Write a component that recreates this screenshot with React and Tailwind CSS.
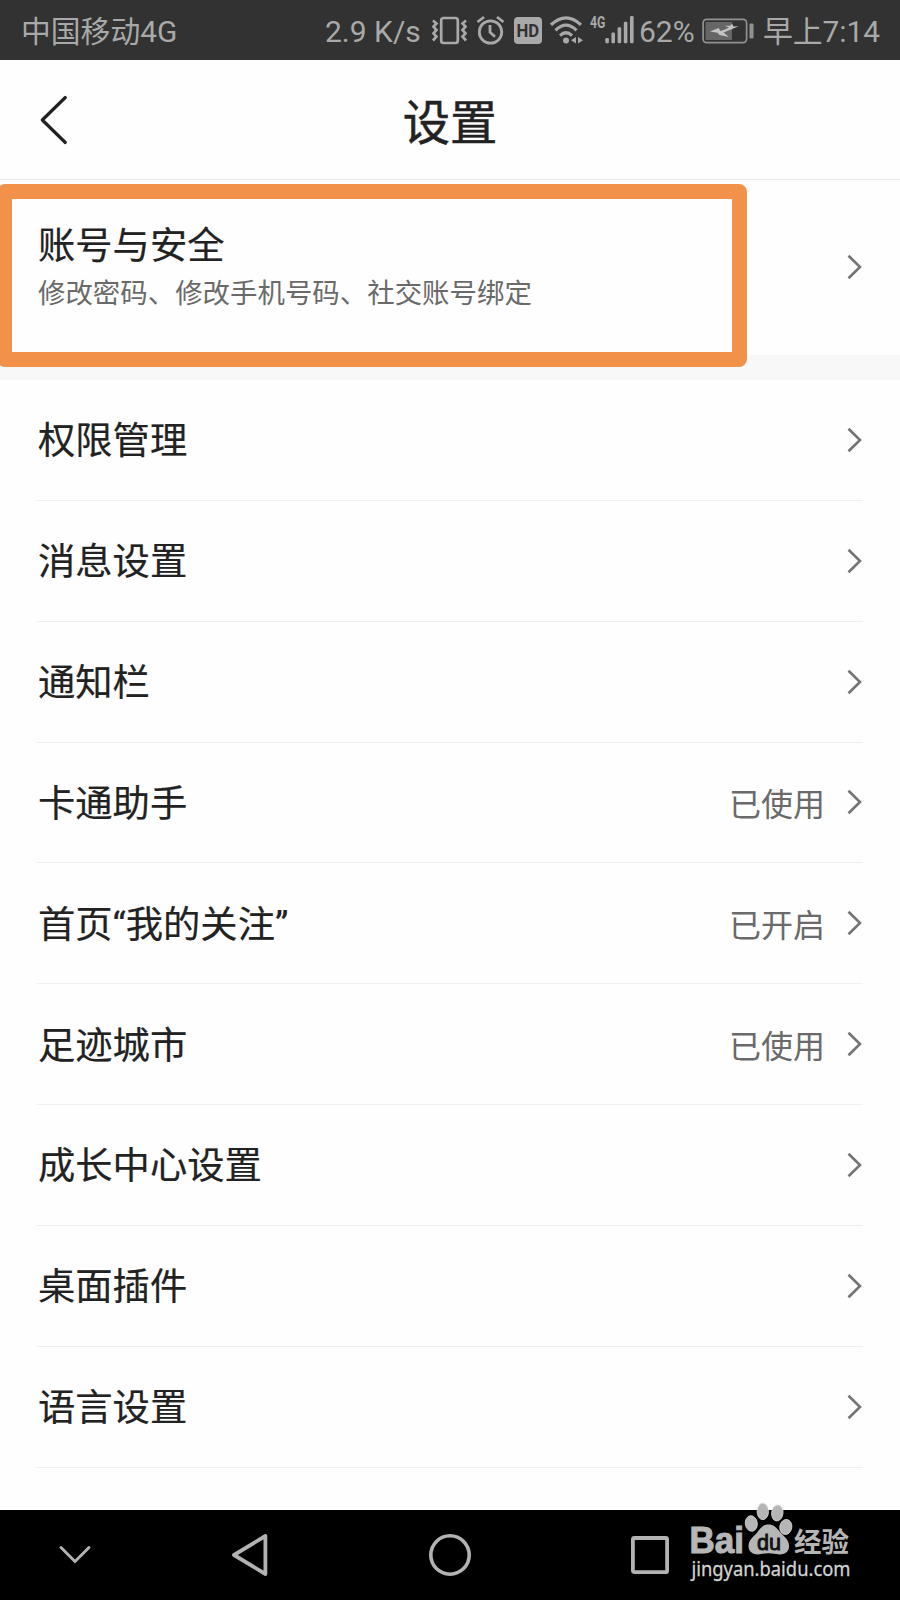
import React from "react";

const rows = [
  { label: "权限管理" },
  { label: "消息设置" },
  { label: "通知栏" },
  { label: "卡通助手", value: "已使用" },
  { label: "首页“我的关注”", value: "已开启" },
  { label: "足迹城市", value: "已使用" },
  { label: "成长中心设置" },
  { label: "桌面插件" },
  { label: "语言设置" },
];

function Chevron() {
  return (
    <svg className="shrink-0" width="16" height="26" viewBox="0 0 16 26" fill="none" stroke="#747474" strokeWidth="2.6">
      <path d="M1.5 1.7 L13 13 L1.5 24.3" />
    </svg>
  );
}

function StatusBar() {
  return (
    <div className="flex h-[60px] shrink-0 items-center bg-[#323232] pl-[21px] font-[Roboto,'Noto_Sans_CJK_SC',sans-serif] text-[30px] leading-[60px] whitespace-nowrap text-[#a9a9a9]">
      <div className="w-[304px] shrink-0 pt-[3px] text-[29.8px]">中国移动4G</div>
      <div className="w-[107px] shrink-0 pt-[3px]">2.9 K/s</div>

      {/* Vibrate */}
      <svg className="shrink-0" width="35" height="30" viewBox="0 0 35 30" fill="none" stroke="#a9a9a9" strokeWidth="2.7">
        <rect x="9.2" y="3" width="16.6" height="25" rx="2.5" />
        <path d="M1 5.5 L4.5 8.5 L1.5 11.7 L4.5 15 L1.5 18.3 L4.5 21.5 L1 25.5" />
        <path d="M34 5.5 L30.5 8.5 L33.5 11.7 L30.5 15 L33.5 18.3 L30.5 21.5 L34 25.5" />
      </svg>

      {/* Alarm */}
      <svg className="ml-[9px] shrink-0" width="29" height="30" viewBox="0 0 29 30" fill="none" stroke="#a9a9a9" strokeWidth="2.8">
        <circle cx="14.5" cy="17" r="11.2" />
        <path d="M14 10 V17.2 L19 21.7" />
        <path d="M1.5 7 L8 2 M21 2 L27.5 7" />
      </svg>

      {/* HD */}
      <div className="ml-[9px] flex h-[27px] w-[28px] shrink-0 items-center justify-center rounded-[4px] bg-[#a9a9a9] text-[19px] leading-none font-bold text-[#323232]">
        <span className="scale-x-[0.88]">HD</span>
      </div>

      {/* Wifi */}
      <svg className="ml-[8px] shrink-0" width="33" height="30" viewBox="0 0 33 30" fill="none" stroke="#a9a9a9" strokeWidth="3.1">
        <path d="M1 9.8 Q16 -4.2 31 9.8" />
        <path d="M5.5 15.3 Q16 5.1 26.5 15.3" />
        <path d="M10 20.6 Q16 14.9 22 20.6" />
        <circle cx="16" cy="25.4" r="3" fill="#a9a9a9" stroke="none" />
        <path d="M26 22 V28.5 L21 25.3 Z M28 22 V28.5 L33 25.3 Z" fill="#a9a9a9" stroke="none" />
      </svg>

      {/* Signal */}
      <div className="ml-[7px] h-[34px] w-[15px] shrink-0 text-[17px] leading-[18px] font-bold">
        <span className="inline-block origin-left scale-x-[0.72]">4G</span>
      </div>
      <svg className="shrink-0" width="29" height="30" viewBox="0 0 29 30" fill="#a9a9a9">
        <rect x="0.3" y="23" width="3.6" height="5.3" rx="1.2" />
        <rect x="6.4" y="17.5" width="3.6" height="10.8" rx="1.2" />
        <rect x="12.6" y="12.3" width="3.6" height="16" rx="1.2" />
        <rect x="18.8" y="6.8" width="3.6" height="21.5" rx="1.2" />
        <rect x="25" y="1" width="3.6" height="27.3" rx="1.2" />
      </svg>

      <div className="ml-[5px] w-[63px] shrink-0 pt-[3px]">62%</div>

      {/* Battery */}
      <svg className="mt-[1px] shrink-0" width="52" height="26" viewBox="0 0 52 26" fill="none">
        <rect x="1.1" y="1.4" width="43.5" height="23.2" rx="3.5" stroke="#929292" strokeWidth="1.7" />
        <rect x="3.5" y="4" width="26.5" height="18" fill="#666666" />
        <path d="M8 13.5 L16.5 10 L18.5 13 L23 11.5 L27 9.5 L23 7.8 L28.5 7.8 L30 5.5 L31.5 8.5 L36.5 8.3 L29 11.5 L21.5 14.5 L27 19 L17.5 17 L15.5 14.8 Z" fill="#c4c4c4" />
        <rect x="47.5" y="5.5" width="4" height="15" rx="1" fill="#929292" />
      </svg>

      <div className="ml-[9px] shrink-0 pt-[3px] text-[29.8px]">早上7:14</div>
    </div>
  );
}

function Header() {
  return (
    <div className="grid h-[120px] shrink-0 grid-cols-3 items-center border-b border-[#e6eaec] px-[38px]">
      <svg width="32" height="52" viewBox="0 0 32 52" fill="none" stroke="#222" strokeWidth="3.2" strokeLinecap="round" strokeLinejoin="round">
        <path d="M27.3 3.5 L4.3 26 L27.3 48.5" />
      </svg>
      <h1 className="text-center text-[47.3px] leading-none text-[#222] [-webkit-text-stroke:0.5px_#222]">设置</h1>
    </div>
  );
}

function NavBar() {
  return (
    <div className="flex h-[90px] shrink-0 items-center bg-black text-[#b2b2b2]">
      <svg className="ml-[58px] shrink-0" width="34" height="44" viewBox="0 0 34 44" fill="none" stroke="currentColor" strokeWidth="3" strokeLinecap="round">
        <path d="M3 14.5 L17 28.5 L31 14.5" />
      </svg>
      <svg className="ml-[138px] shrink-0" width="40" height="44" viewBox="0 0 40 44" fill="none" stroke="currentColor" strokeWidth="3.8" strokeLinejoin="round">
        <path d="M4 22 L35.4 3 V41 Z" />
      </svg>
      <svg className="ml-[158px] shrink-0" width="44" height="44" viewBox="0 0 44 44" fill="none" stroke="currentColor" strokeWidth="3.6">
        <circle cx="22" cy="22" r="19.2" />
      </svg>
      <svg className="ml-[158px] shrink-0" width="40" height="44" viewBox="0 0 40 44" fill="none" stroke="currentColor" strokeWidth="3.8">
        <rect x="2.9" y="5" width="34.2" height="34.2" rx="1.5" />
      </svg>
    </div>
  );
}

function Watermark() {
  return (
    <svg className="absolute right-[48px] bottom-[16px] overflow-visible" width="164" height="84" viewBox="0 0 164 84" fill="#b6b6b6">
      <text x="1.5" y="53.3" textLength="54.5" lengthAdjust="spacingAndGlyphs" fontSize="36.5" fontWeight="700" fontFamily="Liberation Sans, sans-serif" stroke="#b6b6b6" strokeWidth="1.1">Bai</text>
      <g stroke="#d9d9d9" strokeWidth="0.8">
        <ellipse cx="63.3" cy="23.5" rx="6" ry="7.8" transform="rotate(-8 63.3 23.5)" />
        <ellipse cx="74.8" cy="11.5" rx="5.7" ry="8.2" />
        <ellipse cx="89.3" cy="13" rx="5.7" ry="8" transform="rotate(8 89.3 13)" />
        <ellipse cx="97.8" cy="27" rx="6" ry="7.6" transform="rotate(10 97.8 27)" />
      </g>
      <path d="M80.5 24.5 C86.5 24.5 89.5 29 92.5 32.5 C97 37.5 101.5 40 101 47 C100.5 54.5 93 55 88 54 C83 53 78 53 73 54 C67 55.5 60.5 53 60.5 46 C60.5 39.5 66 36.5 69.5 32 C72.5 28 75 24.5 80.5 24.5 Z" />
      <text x="69" y="50" textLength="24" lengthAdjust="spacingAndGlyphs" fontSize="22.5" fontFamily="Liberation Sans, sans-serif" fill="#111" stroke="#111" strokeWidth="0.9">du</text>
      <text x="106" y="52" textLength="55" lengthAdjust="spacingAndGlyphs" fontSize="27.5" fontWeight="700" fontFamily="Noto Sans CJK SC, sans-serif">经验</text>
      <text x="3.5" y="75.7" textLength="159" lengthAdjust="spacingAndGlyphs" fontSize="19.5" fontFamily="Noto Sans, sans-serif" fill="#d2d2d2" stroke="#d2d2d2" strokeWidth="0.3">jingyan.baidu.com</text>
    </svg>
  );
}

export default function App() {
  return (
    <div className="relative flex h-[1600px] w-[900px] flex-col overflow-hidden bg-[#fefefe] font-['Noto_Sans_CJK_SC',sans-serif] text-[#222]">
      <StatusBar />
      <Header />

      {/* Account row with highlight frame */}
      <div className="relative flex h-[175px] shrink-0 items-center justify-between pr-[37px] pb-[2px] pl-[38px]">
        <div className="-mt-[3px]">
          <div className="text-[37.3px] leading-[52px] [-webkit-text-stroke:0.2px_#222]">账号与安全</div>
          <div className="text-[27.45px] leading-[44px] text-[#6a6a6a]">修改密码、修改手机号码、社交账号绑定</div>
        </div>
        <Chevron />
        <div className="absolute top-[4px] -left-[3px] z-10 h-[183px] w-[750px] rounded-[8px] border-[15px] border-[#f29149]" />
      </div>
      <div className="h-[25px] shrink-0 bg-[#f8f8f8]" />

      <div className="flex-1 px-[37px]">
        {rows.map((row) => (
          <div key={row.label} className="flex h-[120.85px] items-center border-b border-[#efefef]">
            <div className="flex-1 pt-[3px] pl-[1px] font-[Roboto,'Noto_Sans_CJK_SC',sans-serif] text-[37.3px] leading-[54px] [-webkit-text-stroke:0.2px_#222]">
              {row.label}
            </div>
            {row.value && <div className="-mt-[1px] mr-[22px] text-[32px] leading-[48px] text-[#6a6a6a]">{row.value}</div>}
            <Chevron />
          </div>
        ))}
      </div>

      <NavBar />
      <Watermark />
    </div>
  );
}
